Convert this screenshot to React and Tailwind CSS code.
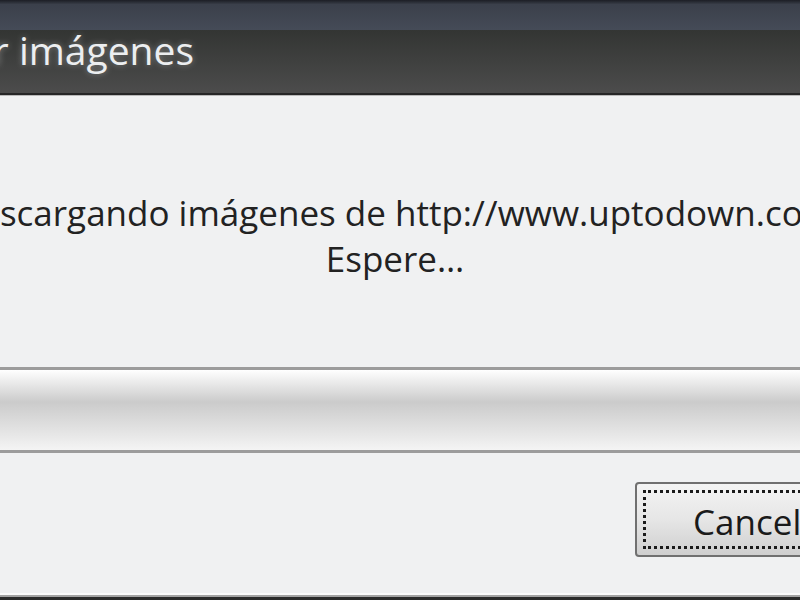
// Descargar imágenes – progress dialog (cropped, zoomed-in view)

const App = () => {
  return (
    <div className="w-[800px] h-[600px] overflow-hidden flex flex-col bg-[#f0f1f2] font-['Open_Sans',sans-serif]">
      {/* window frame top */}
      <div className="h-[30px] shrink-0 bg-gradient-to-b from-[#1c1e25] via-[#3b404b] via-[15%] to-[#454b57]" />

      {/* title bar */}
      <div className="h-[63px] shrink-0 bg-gradient-to-b from-[#333533] to-[#4c4c4c] flex items-center">
        <div className="w-[194px] shrink-0 flex justify-end">
          <span className="whitespace-nowrap text-[39px] leading-none text-[#eceef0] -mt-[24px] [text-shadow:0_0_6px_rgba(255,255,255,0.35)]">
            Descargar imágenes
          </span>
        </div>
      </div>
      <div className="h-[2px] shrink-0 bg-[#262626]" />
      <div className="h-[1px] shrink-0 bg-[#b9b9b9]" />

      {/* message */}
      <div className="mt-[94px] w-[790px] flex flex-col items-center text-[35px] leading-[46px] text-[#222222]">
        <span className="whitespace-nowrap">Descargando imágenes de http://www.uptodown.com</span>
        <span className="whitespace-nowrap">Espere…</span>
      </div>

      {/* progress bar */}
      <div className="mt-[85px] h-[86px] shrink-0 border-y-[3px] border-[#9c9c9c] bg-gradient-to-b from-[#ffffff] via-[#cbcbcb] via-[40%] to-[#f4f4f4]" />

      {/* buttons */}
      <div className="mt-[29px] pl-[635px] flex">
        <button className="shrink-0 w-[258px] h-[75px] rounded-[4px] border-2 border-[#707070] p-[6px] bg-gradient-to-b from-[#f4f4f4] via-[#e6e6e6] via-50% to-[#cfcfcf]">
          <div className="h-full border-[3px] border-dotted border-[#1a1a1a] flex items-center justify-center text-[35px] leading-none pt-[4px] text-[#1a1a1a]">
            Cancelar
          </div>
        </button>
      </div>

      <div className="mt-auto h-[2px] shrink-0 bg-[#fbfbfb]" />
      <div className="h-[2px] shrink-0 bg-[#a3a3a3]" />
      <div className="h-[3px] shrink-0 bg-[#2b2b2b]" />
    </div>
  );
};

export default App;
